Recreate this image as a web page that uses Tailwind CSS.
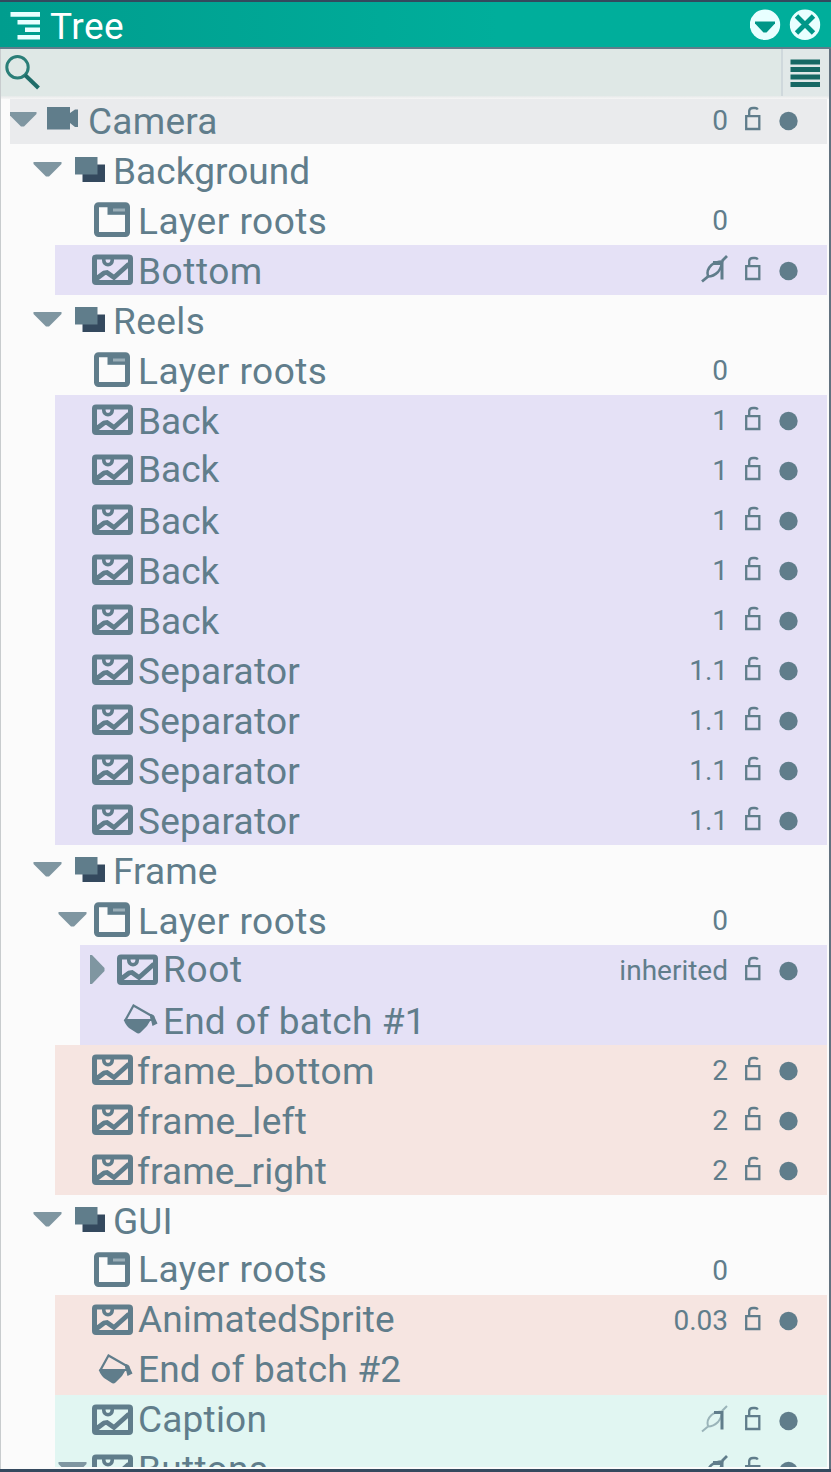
<!DOCTYPE html>
<html lang="en">
<head>
<meta charset="utf-8">
<title>Tree</title>
<script src="https://cdn.jsdelivr.net/npm/@tailwindcss/browser@4"></script>
</head>
<body class="w-[831px] h-[1472px] overflow-hidden bg-[#fbfbfb] font-['Roboto',sans-serif] text-[#607d8b]">
<svg class="hidden">
  <symbol id="down" viewBox="0 0 29 50"><path d="M0.500 17H28.500V19L16 31.500H13L0.500 19Z" fill="#7f96a1"/></symbol>
  <symbol id="right" viewBox="0 0 29 50"><path d="M7 10H9L21.500 23V26L9 39H7Z" fill="#7f96a1"/></symbol>
  <symbol id="camera" viewBox="0 0 49 50"><path d="M10 12H33V18L38 14.500H41V32H38L33 28V34.500H10Z" fill="#607d8b"/></symbol>
  <symbol id="stack" viewBox="0 0 49 50"><path d="M20.500 19.500H43V37H20.500Z" fill="#34495e"/><path d="M13 12H35.500V29.500H13Z" fill="#607d8b"/></symbol>
  <symbol id="folder" viewBox="0 0 49 50"><rect x="9.500" y="9.800" width="31" height="29.700" rx="2" fill="none" stroke="#607d8b" stroke-width="5"/><path d="M20.500 10V19.800H39V10Z" fill="#607d8b"/><path d="M26 15H38" stroke="#9bafb8" stroke-width="3"/></symbol>
  <symbol id="image" viewBox="0 0 49 50"><rect x="7.500" y="12" width="36" height="25.500" rx="1.500" fill="none" stroke="#607d8b" stroke-width="5"/><path d="M16.800 13V15.500A4.200 4.200 0 0 0 25.200 15.500V13" fill="none" stroke="#607d8b" stroke-width="3.600"/><path d="M9 34L17 28L20 27.500L27 32.500L42 19" fill="none" stroke="#607d8b" stroke-width="4.800"/></symbol>
  <symbol id="bucket" viewBox="0 0 49 50"><path d="M21.500 10.500L39 20.500L40 25H13.500Z" fill="none" stroke="#607d8b" stroke-width="2.200"/><path d="M12 24.500H39L35 31L28.500 37.500Q26.500 39.500 24 37.500L17 33Q12 28 12 24.500Z" fill="#607d8b"/><path d="M37.500 19Q42.500 19 43 23L45.500 28.500L40.500 31Z" fill="#607d8b"/></symbol>
  <symbol id="lock" viewBox="0 0 16 50"><path d="M1.200 21.200H14.300V34H1.200ZM4.200 21.200V15.800Q4.500 13 8 13H10Q12 13 12.800 14.500" fill="none" stroke="#607d8b" stroke-width="2.300"/></symbol>
  <symbol id="brush" viewBox="0 0 28 50"><path d="M1 36.500L7 31.500M21 16L26 11" fill="none" stroke="#607d8b" stroke-width="2.800"/><path d="M7 31.500Q5 25 10.500 20Q15 16.500 21 16.500Q21 22 17 27Q12.500 31.500 7 31.500" fill="none" stroke="#607d8b" stroke-width="2.500"/><path d="M12 16H22.500V34.500H19.500V20H12Z" fill="#607d8b"/></symbol>
  <symbol id="brushthin" viewBox="0 0 28 50"><path d="M1 36.500L7 31.500M21 16L26 11M7 31.500Q5 25 10.500 20Q15 16.500 21 16.500Q21 22 17 27Q12.500 31.500 7 31.500" fill="none" stroke="#607d8b" stroke-opacity=".55" stroke-width="2"/><path d="M13 16H22.500V34.500H19.500V19H13Z" fill="#607d8b"/></symbol>
</svg>
<div class="flex h-full flex-col border-l border-[#c8ccce] border-r-2 border-r-[#62727f]">
  <header class="-ml-px -mr-0.5 h-[49px] shrink-0 border-t-2 border-t-[#34495e] border-b-2 border-b-[#607d8b] bg-linear-to-r from-[#009d8e] to-[#00ae9b] to-60% flex items-start text-white">
    <svg class="w-[50px] h-[45px] shrink-0" viewBox="0 0 50 45"><path d="M10.500 10H40V14.800H10.500ZM17.500 18H40V22.500H17.500ZM25 25.500H40V30H25ZM17.500 33H40V37.500H17.500Z" fill="#e8ffff"/></svg>
    <span class="flex-1 text-[37px] leading-[44px] pt-[3px] tracking-[0.5px]">Tree</span>
    <svg class="w-[81px] h-[45px] shrink-0" viewBox="750 2 81 45"><circle cx="765" cy="24.700" r="15.200" fill="#e8ffff"/><path d="M755 21.500H775V23.500L766.500 32.500H763.500L755 23.500Z" fill="#009688"/><circle cx="805" cy="24.700" r="15.200" fill="#e8ffff"/><path d="M796.500 16L813.500 33M813.500 16L796.500 33" stroke="#009688" stroke-width="4.800"/></svg>
  </header>
  <div class="h-[47px] shrink-0 bg-[#dfe8e6] flex justify-between">
    <svg class="w-[50px] h-[47px]" viewBox="1 49 50 47"><circle cx="17.500" cy="67.300" r="10.700" fill="none" stroke="#2a7e78" stroke-width="3"/><path d="M25 75L38.500 88" stroke="#1f6c69" stroke-width="4"/></svg>
    <div class="w-[48px] border-l-2 border-[#cfd8dc] bg-[#e1e8e8]"><svg class="w-[46px] h-[47px]" viewBox="783 49 46 47"><path d="M790.500 62H820M790.500 69.500H820M790.500 77H820M790.500 84.500H820" stroke="#176864" stroke-width="5"/></svg></div>
  </div>
  <div class="h-[3px] shrink-0 bg-linear-to-b from-[#e6e9e9] to-[#f6f6f6]"></div>
  <main id="tree" class="-mt-[4px] mb-[5px] h-[1372px] shrink-0 overflow-hidden pr-0.5"></main>
  <footer class="-ml-px -mr-0.5 h-[3px] -mt-[3px] shrink-0 bg-[#34495e]"></footer>
</div>
<script>
const purple = "bg-[#e5e1f6]", pink = "bg-[#f6e5e1]", mint = "bg-[#e1f6f2]";
const starts = ["ml-[9px] pl-0", "ml-[29px] pl-[3px]", "ml-[54px] pl-[3px]", "ml-[79px] pl-[3px]"];
const spacing = {Camera: .25, Background: .05, "Layer roots": .5, Bottom: .55, Reels: .4, Back: 0, Separator: .25, Frame: .1,
  Root: .65, "End of batch #1": .17, "End of batch #2": .2, frame_bottom: .42, frame_left: .3, frame_right: .15, GUI: .1,
  AnimatedSprite: .15, Caption: .2, Buttons: .3};
// level, arrow, icon, label, value, background, label is raised
const rows = [
 [0,"down","camera","Camera","0","bg-[#eaebed]",0],
 [1,"down","stack","Background","","",0],
 [2,"","folder","Layer roots","0","",0],
 [2,"","image","Bottom","@brush",purple,0],
 [1,"down","stack","Reels","","",0],
 [2,"","folder","Layer roots","0","",0],
 [2,"","image","Back","1",purple,0],
 [2,"","image","Back","1",purple,1],
 [2,"","image","Back","1",purple,0],
 [2,"","image","Back","1",purple,0],
 [2,"","image","Back","1",purple,0],
 [2,"","image","Separator","1.1",purple,0],
 [2,"","image","Separator","1.1",purple,0],
 [2,"","image","Separator","1.1",purple,0],
 [2,"","image","Separator","1.1",purple,0],
 [1,"down","stack","Frame","","",0],
 [2,"down","folder","Layer roots","0","",0],
 [3,"right","image","Root","inherited",purple,1],
 [3,"","bucket","End of batch #1","",purple,0],
 [2,"","image","frame_bottom","2",pink,0],
 [2,"","image","frame_left","2",pink,0],
 [2,"","image","frame_right","2",pink,0],
 [1,"down","stack","GUI","","",0],
 [2,"","folder","Layer roots","0","",1],
 [2,"","image","AnimatedSprite","0.03",pink,1],
 [2,"","bucket","End of batch #2","",pink,1],
 [2,"","image","Caption","@brushthin",mint,1],
 [2,"down","image","Buttons","@brush",mint,1],
];
document.getElementById("tree").innerHTML = rows.map(([level, arrow, icon, label, value, bg, raised]) => {
  const glyph = value[0] === "@";
  return `<div class="flex h-[50px] items-start ${starts[level]} ${bg} ${level ? "" : "[clip-path:inset(4px_0_1px_0)]"}">
    <svg class="${level ? "w-[29px]" : "w-[29px] -ml-[2px]"} h-[50px] shrink-0">${arrow ? `<use href="#${arrow}"/>` : ""}</svg>
    <svg class="w-[49px] h-[50px] shrink-0"><use href="#${icon}"/></svg>
    <span class="flex-1 whitespace-pre text-[37px] leading-[44px] ${label[0] === "f" ? "pl-[1px]" : "pl-[2px]"} ${raised ? "pt-[3px]" : "pt-[5px]"}" style="letter-spacing:${spacing[label]}px">${label}</span>
    ${glyph ? `<svg class="w-[28px] h-[50px]"><use href="#${value.slice(1)}"/></svg>` : `<span class="pr-px text-[28px] leading-[34px] pt-[9px]">${value}</span>`}
    <span class="flex ${value && (glyph || bg) ? "" : "invisible"}">
      <svg class="ml-[16px] w-[16px] h-[50px]"><use href="#lock"/></svg>
      <svg class="ml-[18px] mr-[29px] w-[19px] h-[50px]" viewBox="0 0 19 50"><circle cx="9.500" cy="26" r="9.200" fill="#607d8b"/></svg>
    </span></div>`;
}).join("");
</script>
</body>
</html>
